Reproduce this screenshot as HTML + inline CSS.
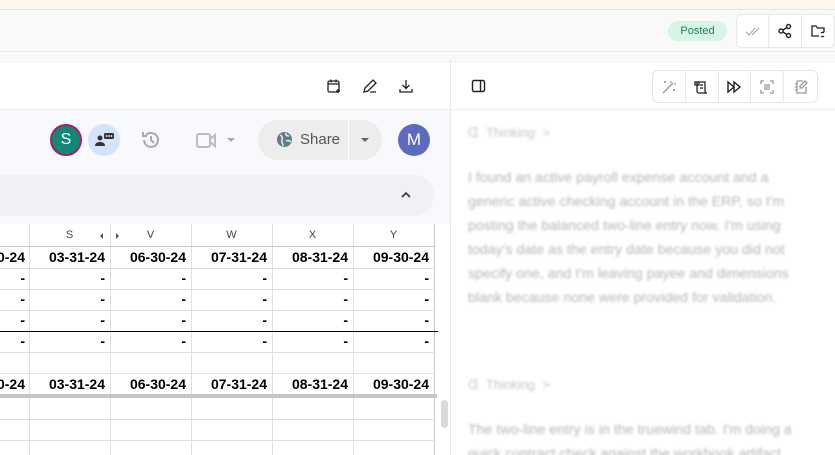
<!DOCTYPE html>
<html style="width:835px;height:455px;overflow:hidden"><head><meta charset="utf-8"><style>
*{box-sizing:border-box;margin:0;padding:0}
body{width:835px;height:455px;overflow:hidden;background:#f9f9f9;font-family:"Liberation Sans",Arial,sans-serif;position:relative}
.a{position:absolute}
.vl{position:absolute;width:1px;background:#e0e0e0}
.hl{position:absolute;height:1px;background:#e0e0e0;left:0;width:435px}
.c{position:absolute;font-size:14px;font-weight:bold;color:#000;text-align:right;width:76px}
.h{position:absolute;font-size:11px;color:#444;text-align:center;width:81px;top:229px}
.ib{position:absolute;top:70px;height:33px;border:1px solid #e6e6e6;border-radius:6px;background:#fff;display:flex}
.ib div{width:33px;height:31px;border-right:1px solid #e6e6e6;display:flex;align-items:center;justify-content:center}
.ib div:last-child{border-right:none}
.bl{filter:blur(1.2px);color:#b5b5b5}
</style></head><body>
<div class="a" style="left:0;top:0;width:835px;height:10px;background:#fdf6ea;border-bottom:1px solid #f1e4cc"></div>
<div class="a" style="left:0;top:51px;width:835px;height:1px;background:#ececec"></div>
<div class="a" style="left:668px;top:21px;width:59px;height:20px;border-radius:10px;background:#d7f5e6;color:#1c7d5a;font-size:11px;text-align:center;line-height:20px">Posted</div>
<div class="a" style="left:736px;top:14px;width:99px;height:34px;border:1px solid #e6e6e6;border-radius:6px;background:#fff;display:flex">
<div style="width:33px;border-right:1px solid #e6e6e6;display:flex;align-items:center;justify-content:center"><svg width="16" height="12" viewBox="0 0 16 12" fill="none" stroke="#aaa" stroke-width="1.2"><path d="M1 7l3 3 6-7M7 10l7-7"/></svg></div>
<div style="width:33px;border-right:1px solid #e6e6e6;display:flex;align-items:center;justify-content:center"><svg width="16" height="16" viewBox="0 0 16 16" fill="none" stroke="#222" stroke-width="1.4"><circle cx="11.5" cy="3.5" r="2"/><circle cx="4" cy="8" r="2"/><circle cx="11.5" cy="12.5" r="2"/><path d="M6 7l4-2.5M6 9l4 2.5"/></svg></div>
<div style="width:33px;display:flex;align-items:center;justify-content:center"><svg width="16" height="14" viewBox="0 0 16 14" fill="none" stroke="#222" stroke-width="1.3"><path d="M9 12H2V2h4l1.5 2H14v4"/><path d="M11 9a2 2 0 013 0M14 12a2 2 0 01-3 0"/></svg></div>
</div>
<div class="a" style="left:0;top:61px;width:450px;height:394px;background:#fff;border-top:1px solid #eee"></div>
<div class="a" style="left:0;top:109px;width:450px;height:1px;background:#ececec"></div>
<svg class="a" style="left:326px;top:78px" width="16" height="16" viewBox="0 0 16 16" fill="none" stroke="#222" stroke-width="1.3"><rect x="2" y="3" width="11" height="11" rx="1.5"/><path d="M2 6h11M5 1.5v3M10 1.5v3M12 11v4M10 13h4"/></svg>
<svg class="a" style="left:362px;top:78px" width="16" height="16" viewBox="0 0 16 16" fill="none" stroke="#222" stroke-width="1.3"><path d="M2 14l1-4 8-8 3 3-8 8zM8 14h6"/></svg>
<svg class="a" style="left:398px;top:78px" width="16" height="16" viewBox="0 0 16 16" fill="none" stroke="#222" stroke-width="1.3"><path d="M8 2v8M4.5 7L8 10.5 11.5 7M2 11v3h12v-3"/></svg>
<div class="a" style="left:0;top:110px;width:450px;height:114px;background:#f8f9fc"></div>
<div class="a" style="left:50px;top:124px;width:32px;height:32px;border-radius:50%;background:#0f8878;border:2px solid #b01a6a;color:#fff;font-size:16px;text-align:center;line-height:28px">S</div>
<div class="a" style="left:88px;top:124px;width:32px;height:32px;border-radius:50%;background:#d3e3fd"></div>
<svg class="a" style="left:94px;top:131px" width="22" height="16" viewBox="0 0 22 16"><circle cx="6" cy="7" r="2.5" fill="#333"/><path d="M1 15c0-3 2.5-4 5-4s5 1 5 4z" fill="#333"/><rect x="10" y="2" width="10" height="6" rx="1.5" fill="#333"/><circle cx="12.5" cy="5" r=".9" fill="#fff"/><circle cx="15" cy="5" r=".9" fill="#fff"/><circle cx="17.5" cy="5" r=".9" fill="#fff"/></svg>
<svg class="a" style="left:140px;top:129px" width="22" height="22" viewBox="0 0 22 22" fill="none" stroke="#aaa" stroke-width="2"><path d="M4 11a7 7 0 1 0 2-5M3 3v4h4M11 7v4l3 3"/></svg>
<svg class="a" style="left:196px;top:132px" width="22" height="17" viewBox="0 0 22 17" fill="none" stroke="#bbb" stroke-width="2"><rect x="1" y="2" width="13" height="13" rx="2"/><path d="M14 7l5-4v11l-5-4"/></svg>
<div class="a" style="left:227px;top:138px;border:4px solid transparent;border-top-color:#aaa"></div>
<div class="a" style="left:258px;top:120px;width:124px;height:40px;border-radius:20px;background:#ededed"></div>
<div class="a" style="left:348px;top:120px;width:1px;height:40px;background:#fff"></div>
<svg class="a" style="left:276px;top:131px" width="17" height="17" viewBox="0 0 17 17"><circle cx="8.5" cy="8.5" r="7.5" fill="#5f7d8a"/><path d="M4 4c2 1 3 3 2 5s1 3 1 6M10 2c-1 2 1 3 3 3M10 10c2-1 4 0 5 1" stroke="#ededed" stroke-width="1.5" fill="none"/></svg>
<div class="a" style="left:300px;top:131px;font-size:15px;color:#555">Share</div>
<div class="a" style="left:361px;top:138px;border:4.5px solid transparent;border-top-color:#666"></div>
<div class="a" style="left:398px;top:124px;width:32px;height:32px;border-radius:50%;background:#5c6bc0;color:#fff;font-size:17px;text-align:center;line-height:32px">M</div>
<div class="a" style="left:0;top:175px;width:434px;height:41px;border-radius:0 20px 20px 0;background:#eff1f6"></div>
<svg class="a" style="left:400px;top:191px" width="12" height="8" viewBox="0 0 12 8" fill="none" stroke="#333" stroke-width="1.6"><path d="M2 6l4-4 4 4"/></svg>
<div class="a" style="left:0;top:224px;width:435px;height:231px;background:#fff"></div>
<div class="vl" style="left:29px;top:224px;height:231px"></div>
<div class="vl" style="left:110px;top:224px;height:231px"></div>
<div class="vl" style="left:191px;top:224px;height:231px"></div>
<div class="vl" style="left:272px;top:224px;height:231px"></div>
<div class="vl" style="left:353px;top:224px;height:231px"></div>
<div class="vl" style="left:434px;top:224px;height:231px;background:#c8c8c8"></div>
<div class="hl" style="top:246px;background:#c8c8c8"></div>
<div class="hl" style="top:268px"></div><div class="hl" style="top:289px"></div><div class="hl" style="top:310px"></div>
<div class="hl" style="top:331px;background:#000;width:438px"></div>
<div class="hl" style="top:352px"></div><div class="hl" style="top:373px"></div>
<div class="a" style="left:0;top:394px;width:437px;height:4px;background:#c6c6c6"></div>
<div class="hl" style="top:419px"></div><div class="hl" style="top:440px"></div>
<div class="h" style="left:29px">S</div><div class="h" style="left:110px">V</div><div class="h" style="left:191px">W</div><div class="h" style="left:272px">X</div><div class="h" style="left:353px">Y</div>
<div class="a" style="left:100px;top:233px;border:3px solid transparent;border-right-color:#555;border-left:none"></div>
<div class="a" style="left:116px;top:233px;border:3px solid transparent;border-left-color:#555;border-right:none"></div>
<div class="a" style="left:441px;top:400px;width:7px;height:28px;border-radius:4px;background:#dadada"></div>
<div id="g"></div>
<div class="a" style="left:450px;top:61px;width:385px;height:394px;background:#fff;border-left:1px solid #e8e8e8;border-top:1px solid #eee"></div>
<div class="a" style="left:451px;top:109px;width:384px;height:1px;background:#ececec"></div>
<svg class="a" style="left:471px;top:79px" width="16" height="15" viewBox="0 0 16 15" fill="none" stroke="#222" stroke-width="1.4"><rect x="1.5" y="1.5" width="12" height="11" rx="1.5"/><path d="M9.5 1.5v11"/></svg>
<div class="ib" style="left:652px;width:166px">
<div><svg width="16" height="16" viewBox="0 0 16 16" fill="none" stroke="#999" stroke-width="1.3"><path d="M2 14L12 4M10 2v2M13 5h2M4 2v2M3 3h2M13 10v2M12 11h2"/></svg></div>
<div><svg width="16" height="16" viewBox="0 0 16 16" fill="none" stroke="#222" stroke-width="1.3"><path d="M3 3h8v9a2 2 0 002 2H5a2 2 0 01-2-2zM1 3h4v3H1zM6 6h3M6 9h3"/></svg></div>
<div><svg width="16" height="16" viewBox="0 0 16 16" fill="none" stroke="#222" stroke-width="1.4"><path d="M2 3v10l6-5zM8 3v10l6-5z"/></svg></div>
<div><svg width="16" height="16" viewBox="0 0 16 16" fill="none" stroke="#999" stroke-width="1.3"><path d="M2 5V2h3M11 2h3v3M14 11v3h-3M5 14H2v-3M5 6h6M5 8h6M5 10h6"/></svg></div>
<div><svg width="16" height="16" viewBox="0 0 16 16" fill="none" stroke="#999" stroke-width="1.3"><path d="M4 2h6M4 2v12h9V8M12 2l2 2-5 5H7V7zM2 5h2M2 8h2M2 11h2"/></svg></div>
</div>
<div class="a bl" style="left:468px;top:125px;font-size:13px;color:#c4c4c4">ᗧ&nbsp; Thinking &nbsp;&gt;</div>
<div class="a bl" style="left:468px;top:166px;width:342px;font-size:14.2px;line-height:24px">I found an active payroll expense account and a generic active checking account in the ERP, so I'm posting the balanced two-line entry now. I'm using today's date as the entry date because you did not specify one, and I'm leaving payee and dimensions blank because none were provided for validation.</div>
<div class="a bl" style="left:468px;top:377px;font-size:13px;color:#c4c4c4">ᗧ&nbsp; Thinking &nbsp;&gt;</div>
<div class="a bl" style="left:468px;top:418px;width:360px;font-size:14.2px;line-height:24px;white-space:nowrap">The two-line entry is in the truewind tab. I'm doing a<br>quick contract check against the workbook artifact</div>
<script>
var g=document.getElementById('g'),h='';
var cols=[29,110,191,272,353];
function row(y,t){for(var i=0;i<6;i++){var x=(i==0?-51:cols[i-1]);h+='<div class="c" style="left:'+x+'px;top:'+y+'px">'+t[i]+'</div>';}}
var d=['09-30-24','03-31-24','06-30-24','07-31-24','08-31-24','09-30-24'],s=['-','-','-','-','-','-'];
row(249,d);row(270,s);row(291,s);row(312,s);row(333,s);row(376,d);
g.innerHTML=h;
</script>
</body></html>
